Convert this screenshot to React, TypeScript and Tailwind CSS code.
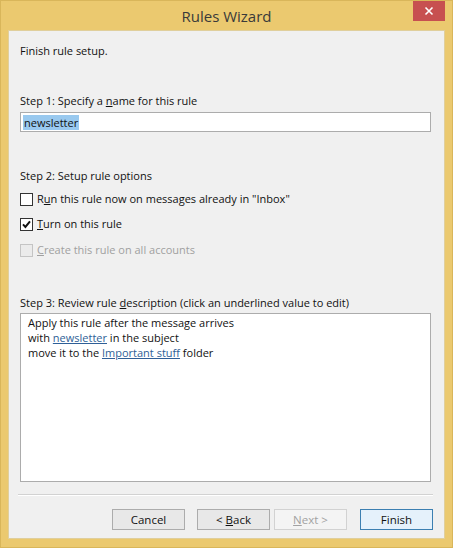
import React from 'react';

const font = { fontFamily: '"Open Sans", "Noto Sans", sans-serif' };

const Check = ({ checked, disabled }: { checked?: boolean; disabled?: boolean }) => (
  <span
    className={`w-[13px] h-[13px] shrink-0 flex items-center justify-center border ${
      disabled ? 'border-[#c4c4c4] bg-[#ebebeb]' : 'border-[#333] bg-white'
    }`}
  >
    {checked && (
      <svg width="9" height="9" viewBox="0 0 9 9">
        <path d="M1 4.4 L3.4 6.9 L8 1.4" fill="none" stroke="#111" strokeWidth="2" />
      </svg>
    )}
  </span>
);

const Button = ({
  children,
  primary,
  disabled,
}: {
  children: React.ReactNode;
  primary?: boolean;
  disabled?: boolean;
}) => (
  <button
    className={`w-[73px] h-[21px] text-[11.5px] leading-[16px] border flex items-center justify-center ${
      primary
        ? 'border-[#3c7fb1] bg-[#e5f1fb]'
        : disabled
        ? 'border-[#d2d2d2] bg-[#f4f4f4] text-[#a2a2a2]'
        : 'border-[#acacac] bg-[#e8e8e8]'
    }`}
  >
    {children}
  </button>
);

export default function App() {
  return (
    <div
      className="w-[453px] h-[548px] bg-[#ebc96f] border border-[#d9b65a] flex flex-col text-[#111]"
      style={font}
    >
      <div className="relative h-[29px] flex items-center justify-center">
        <span className="text-[15px] text-[#3a3a3a] pt-[1px]">Rules Wizard</span>
        <div className="absolute right-[7px] top-0 w-[32px] h-[20px] bg-[#c75050] flex items-center justify-center">
          <svg width="10" height="10" viewBox="0 0 10 10">
            <path d="M1.5 1.5 L8.5 8.5 M8.5 1.5 L1.5 8.5" stroke="#fff" strokeWidth="1.6" />
          </svg>
        </div>
      </div>

      <div className="flex-1 mx-[7px] mb-[8px] bg-[#f0f0f0] border border-[#e0cf9c] flex flex-col text-[11px] leading-[16px]">
        <div className="px-[11px] pt-[12px] flex flex-col">
          <div>Finish rule setup.</div>

          <div className="mt-[34px]">
            Step 1: Specify a <span className="underline">n</span>ame for this rule
          </div>
          <div className="mt-[3px] h-[20px] w-[411px] bg-white border border-[#acacac] flex items-center px-[2px]">
            <span className="bg-[#99c9ef] px-[1px] leading-[15px]">newsletter</span>
          </div>

          <div className="mt-[36px]">Step 2: Setup rule options</div>
          <div className="mt-[7px] flex items-center gap-[4px] h-[16px]">
            <Check />
            <span>
              R<span className="underline">u</span>n this rule now on messages already in "Inbox"
            </span>
          </div>
          <div className="mt-[9px] flex items-center gap-[4px] h-[16px]">
            <Check checked />
            <span>
              <span className="underline">T</span>urn on this rule
            </span>
          </div>
          <div className="mt-[10px] flex items-center gap-[4px] h-[16px] text-[#a0a0a0]">
            <Check disabled />
            <span>
              <span className="underline">C</span>reate this rule on all accounts
            </span>
          </div>

          <div className="mt-[37px]">
            Step 3: Review rule <span className="underline">d</span>escription (click an underlined value to edit)
          </div>
          <div className="mt-[2px] h-[169px] w-[411px] bg-white border border-[#acacac] px-[7px] pt-[1px] flex flex-col">
            <div className="h-[15px] leading-[15px]">Apply this rule after the message arrives</div>
            <div className="h-[14.5px] leading-[15px]">
              with <span className="text-[#2f5f97] underline">newsletter</span> in the subject
            </div>
            <div className="h-[15px] leading-[15px]">
              move it to the <span className="text-[#2f5f97] underline">Important stuff</span> folder
            </div>
          </div>
        </div>

        <div className="mt-[12px] ml-[9px] mr-[11px] border-t border-[#d2d2d2] border-b border-b-white" />

        <div className="mt-[13px] flex justify-end pr-[11px]">
          <Button>Cancel</Button>
          <div className="w-[12px]" />
          <Button>
            &lt; <span className="underline ml-[3px]">B</span>ack
          </Button>
          <div className="w-[4px]" />
          <Button disabled>
            <span className="underline">N</span>ext &gt;
          </Button>
          <div className="w-[13px]" />
          <Button primary>Finish</Button>
        </div>
      </div>
    </div>
  );
}
